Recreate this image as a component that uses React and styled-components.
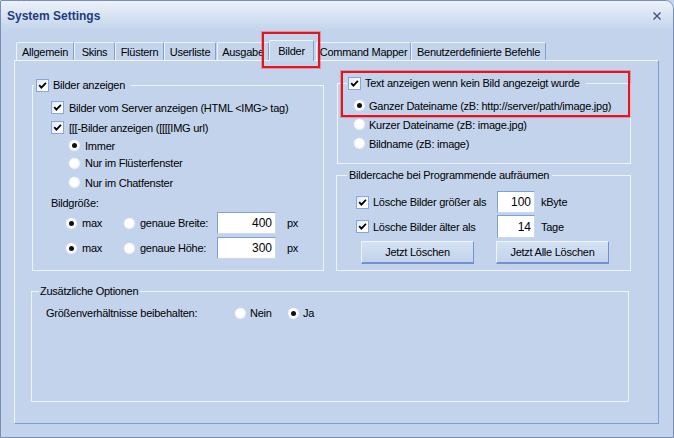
import React from 'react';
import styled, { createGlobalStyle } from 'styled-components';

const GlobalStyle = createGlobalStyle`
  html, body {
    margin: 0;
    padding: 0;
    background: #c2d3eb;
    overflow: hidden;
  }
  body {
    font-family: "Liberation Sans", Arial, sans-serif;
    font-size: 11px;
    letter-spacing: -0.25px;
    color: #000;
  }
`;

const Window = styled.div`
  position: relative;
  width: 674px;
  height: 438px;
  box-sizing: border-box;
  border: 1px solid #7c8db5;
  border-radius: 2px 9px 0 0;
  background: #c2d3eb;
  display: flex;
  flex-direction: column;
  overflow: hidden;
`;

const TitleBar = styled.div`
  height: 30px;
  display: flex;
  align-items: center;
  justify-content: space-between;
  padding: 0 11px 0 6px;
  background: linear-gradient(#edf2fa, #c4d5ec 28px);
`;

const Title = styled.h1`
  margin: 0;
  font-size: 12px;
  font-weight: bold;
  letter-spacing: 0;
  color: #1f3d7c;
`;

const CloseButton = styled.button`
  border: 0;
  padding: 0;
  background: none;
  width: 10px;
  height: 10px;
  display: flex;
`;

const Body = styled.div`
  padding: 0 14px 0 13px;
  display: flex;
  flex-direction: column;
`;

const TabStrip = styled.div`
  height: 29px;
  display: flex;
  align-items: flex-end;
  padding-left: 2px;
`;

const Tab = styled.div`
  position: relative;
  box-sizing: border-box;
  flex: none;
  width: ${p => p.$w}px;
  margin-left: ${p => p.$ml || 0}px;
  height: ${p => (p.$active ? 21 : 18)}px;
  margin-bottom: ${p => (p.$active ? -1 : 0)}px;
  z-index: ${p => (p.$active ? 1 : 0)};
  display: flex;
  align-items: center;
  justify-content: center;
  white-space: nowrap;
  background: ${p => (p.$active ? '#c6d6ed' : '#c2d3eb')};
  border: 1px solid;
  border-color: #eef4fc #7f9fd6 transparent #eef4fc;
  border-bottom: none;
  border-radius: 2px 2px 0 0;
`;

const TabPanel = styled.div`
  height: 364px;
  box-sizing: border-box;
  border: 1px solid;
  border-color: #f2f6fc #7b9cd5 #7b9cd5 #f2f6fc;
  padding: 15px 0 0 17px;
`;

const TopRow = styled.div`
  display: grid;
  grid-template-columns: 292px 295px;
  column-gap: 12px;
  align-items: start;
`;

const Column = styled.div`
  display: flex;
  flex-direction: column;
  gap: 4px;
`;

const Group = styled.fieldset`
  margin: ${p => p.$margin || '0'};
  padding: 0;
  min-width: 0;
  box-sizing: border-box;
  width: ${p => p.$w}px;
  height: ${p => p.$h}px;
  border: 1px solid #eef4fc;
`;

const Legend = styled.legend`
  display: flex;
  align-items: center;
  gap: 4px;
  height: 14px;
  line-height: 14px;
  padding: 0 ${p => p.$pr}px 0 ${p => p.$pl}px;
  margin-left: ${p => p.$ml}px;
`;

const GroupBody = styled.div`
  padding: ${p => p.$pt}px 0 0 ${p => p.$pl}px;
  display: flex;
  flex-direction: column;
`;

const Row = styled.div`
  display: flex;
  align-items: center;
  height: ${p => p.$h}px;
  margin-top: ${p => p.$mt || 0}px;
  padding-left: ${p => p.$indent || 0}px;
  white-space: nowrap;
`;

const Option = styled.label`
  display: flex;
  align-items: center;
  gap: ${p => p.$gap ?? 4}px;
  width: ${p => (p.$w ? `${p.$w}px` : 'auto')};
  white-space: nowrap;
`;

const Box = styled.span`
  flex: none;
  width: 13px;
  height: 13px;
  box-sizing: border-box;
  border: 1px solid #87a7dc;
  background: linear-gradient(135deg, #dfe8f6, #ffffff 70%);
  display: flex;
  align-items: center;
  justify-content: center;
`;

const RadioDot = styled.span`
  flex: none;
  position: relative;
  width: 13px;
  height: 13px;
  box-sizing: border-box;
  border-radius: 50%;
  border: 1px solid #c8d7ee;
  background: radial-gradient(circle at 45% 45%, #ffffff 0 45%, #e8eef8 70%, #b9cbe6 100%);

  &::after {
    content: '';
    display: ${p => (p.$checked ? 'block' : 'none')};
    position: absolute;
    left: 3px;
    top: 3px;
    width: 5px;
    height: 5px;
    border-radius: 50%;
    background: #111;
  }
`;

const NumberField = styled.input`
  box-sizing: border-box;
  width: ${p => p.$w}px;
  height: ${p => p.$h || 22}px;
  margin: 0;
  padding: 0 3px 0 0;
  text-align: right;
  font-family: inherit;
  font-size: 12px;
  letter-spacing: 0;
  color: #000;
  background: #fff;
  border: 1px solid;
  border-color: #7f9fd8 #c9d9f1 #c9d9f1 #7f9fd8;
  outline: none;
`;

const Unit = styled.span`
  margin-left: ${p => p.$ml}px;
`;

const Button = styled.button`
  box-sizing: border-box;
  width: 113px;
  height: 23px;
  padding: 0;
  font-family: inherit;
  font-size: 11px;
  letter-spacing: inherit;
  color: #000;
  background: linear-gradient(#d4e1f3, #c2d3eb);
  border: 1px solid;
  border-color: #eef4fc #7094d2 #6f93d1 #eef4fc;
  border-bottom-width: 2px;
`;

const ButtonRow = styled.div`
  display: flex;
  gap: 22px;
  margin-top: 3px;
  padding-left: 24px;
`;

const Highlight = styled.div`
  position: absolute;
  left: ${p => p.$x}px;
  top: ${p => p.$y}px;
  width: ${p => p.$w}px;
  height: ${p => p.$h}px;
  box-sizing: border-box;
  border: 2px solid #e8141b;
  box-shadow: 0 0 0 1px rgba(232, 20, 27, 0.3);
  pointer-events: none;
  z-index: 5;
`;

const CheckBox = () => (
  <Box>
    <svg width="9" height="9" viewBox="0 0 9 9">
      <path d="M1.2 4.2 L3.4 6.6 L7.9 1.8" fill="none" stroke="#000" strokeWidth="1.8" />
    </svg>
  </Box>
);

const Radio = ({ checked }) => <RadioDot $checked={checked} />;

const tabs = [
  { label: 'Allgemein', w: 58 },
  { label: 'Skins', w: 41 },
  { label: 'Flüstern', w: 49 },
  { label: 'Userliste', w: 52 },
  { label: 'Ausgabe', w: 52, ml: 1 },
  { label: 'Bilder', w: 45, active: true },
  { label: 'Command Mapper', w: 95, ml: 2 },
  { label: 'Benutzerdefinierte Befehle', w: 135 },
];

export default function App() {
  return (
    <>
      <GlobalStyle />
      <Window>
        <TitleBar>
          <Title>System Settings</Title>
          <CloseButton aria-label="Schließen">
            <svg width="10" height="10" viewBox="0 0 10 10">
              <path d="M1.5 1.5 L8.5 8.5 M8.5 1.5 L1.5 8.5" stroke="#3f527e" strokeWidth="1.4" />
            </svg>
          </CloseButton>
        </TitleBar>
        <Body>
          <TabStrip>
            {tabs.map(t => (
              <Tab key={t.label} $w={t.w} $ml={t.ml} $active={t.active}>{t.label}</Tab>
            ))}
          </TabStrip>
          <TabPanel>
            <TopRow>
              <Group $w={292} $h={193} $margin="2px 0 0 0">
                <Legend $ml={1} $pl={2} $pr={6}>
                  <CheckBox />
                  Bilder anzeigen
                </Legend>
                <GroupBody $pt={5} $pl={18}>
                  <Row $h={21}>
                    <Option $gap={5}><CheckBox />Bilder vom Server anzeigen (HTML &lt;IMG&gt; tag)</Option>
                  </Row>
                  <Row $h={19}>
                    <Option $gap={5}><CheckBox />[[[-Bilder anzeigen ([[[[IMG url)</Option>
                  </Row>
                  <Row $h={17} $indent={17}>
                    <Option><Radio checked />Immer</Option>
                  </Row>
                  <Row $h={18} $indent={17}>
                    <Option><Radio />Nur im Flüsterfenster</Option>
                  </Row>
                  <Row $h={21} $indent={17}>
                    <Option><Radio />Nur im Chatfenster</Option>
                  </Row>
                  <Row $h={19}>Bildgröße:</Row>
                  <Row $h={22} $indent={14}>
                    <Option $w={58}><Radio checked />max</Option>
                    <Option $w={94}><Radio />genaue Breite:</Option>
                    <NumberField $w={59} value="400" readOnly />
                    <Unit $ml={11}>px</Unit>
                  </Row>
                  <Row $h={22} $mt={3} $indent={14}>
                    <Option $w={58}><Radio checked />max</Option>
                    <Option $w={94}><Radio />genaue Höhe:</Option>
                    <NumberField $w={59} value="300" readOnly />
                    <Unit $ml={11}>px</Unit>
                  </Row>
                </GroupBody>
              </Group>

              <Column>
                <Group $w={294} $h={88} $margin="0 0 0 1px">
                  <Legend $ml={9} $pl={1} $pr={6}>
                    <CheckBox />
                    Text anzeigen wenn kein Bild angezeigt wurde
                  </Legend>
                  <GroupBody $pt={6} $pl={15}>
                    <Row $h={19}>
                      <Option $gap={3}><Radio checked />Ganzer Dateiname (zB: http://server/path/image.jpg)</Option>
                    </Row>
                    <Row $h={19}>
                      <Option $gap={3}><Radio />Kurzer Dateiname (zB: image.jpg)</Option>
                    </Row>
                    <Row $h={19}>
                      <Option $gap={3}><Radio />Bildname (zB: image)</Option>
                    </Row>
                  </GroupBody>
                </Group>

                <Group $w={295} $h={103}>
                  <Legend $ml={10} $pl={2} $pr={3}>
                    Bildercache bei Programmende aufräumen
                  </Legend>
                  <GroupBody $pt={9} $pl={19}>
                    <Row $h={22}>
                      <Option $w={141}><CheckBox />Lösche Bilder größer als</Option>
                      <NumberField $w={38} value="100" readOnly />
                      <Unit $ml={6}>kByte</Unit>
                    </Row>
                    <Row $h={23} $mt={2}>
                      <Option $w={141}><CheckBox />Lösche Bilder älter als</Option>
                      <NumberField $w={38} $h={23} value="14" readOnly />
                      <Unit $ml={6}>Tage</Unit>
                    </Row>
                  </GroupBody>
                  <ButtonRow>
                    <Button>Jetzt Löschen</Button>
                    <Button>Jetzt Alle Löschen</Button>
                  </ButtonRow>
                </Group>
              </Column>
            </TopRow>

            <Group $w={598} $h={118} $margin="13px 0 0 -1px">
              <Legend $ml={7} $pl={1} $pr={2}>
                Zusätzliche Optionen
              </Legend>
              <GroupBody $pt={7} $pl={14}>
                <Row $h={16}>
                  <Option $w={188}>Größenverhältnisse beibehalten:</Option>
                  <Option $w={53} $gap={3}><Radio />Nein</Option>
                  <Option $gap={3}><Radio checked />Ja</Option>
                </Row>
              </GroupBody>
            </Group>
          </TabPanel>
        </Body>

        <Highlight $x={261} $y={31} $w={58} $h={36} />
        <Highlight $x={340} $y={70} $w={289} $h={46} />
      </Window>
    </>
  );
}
